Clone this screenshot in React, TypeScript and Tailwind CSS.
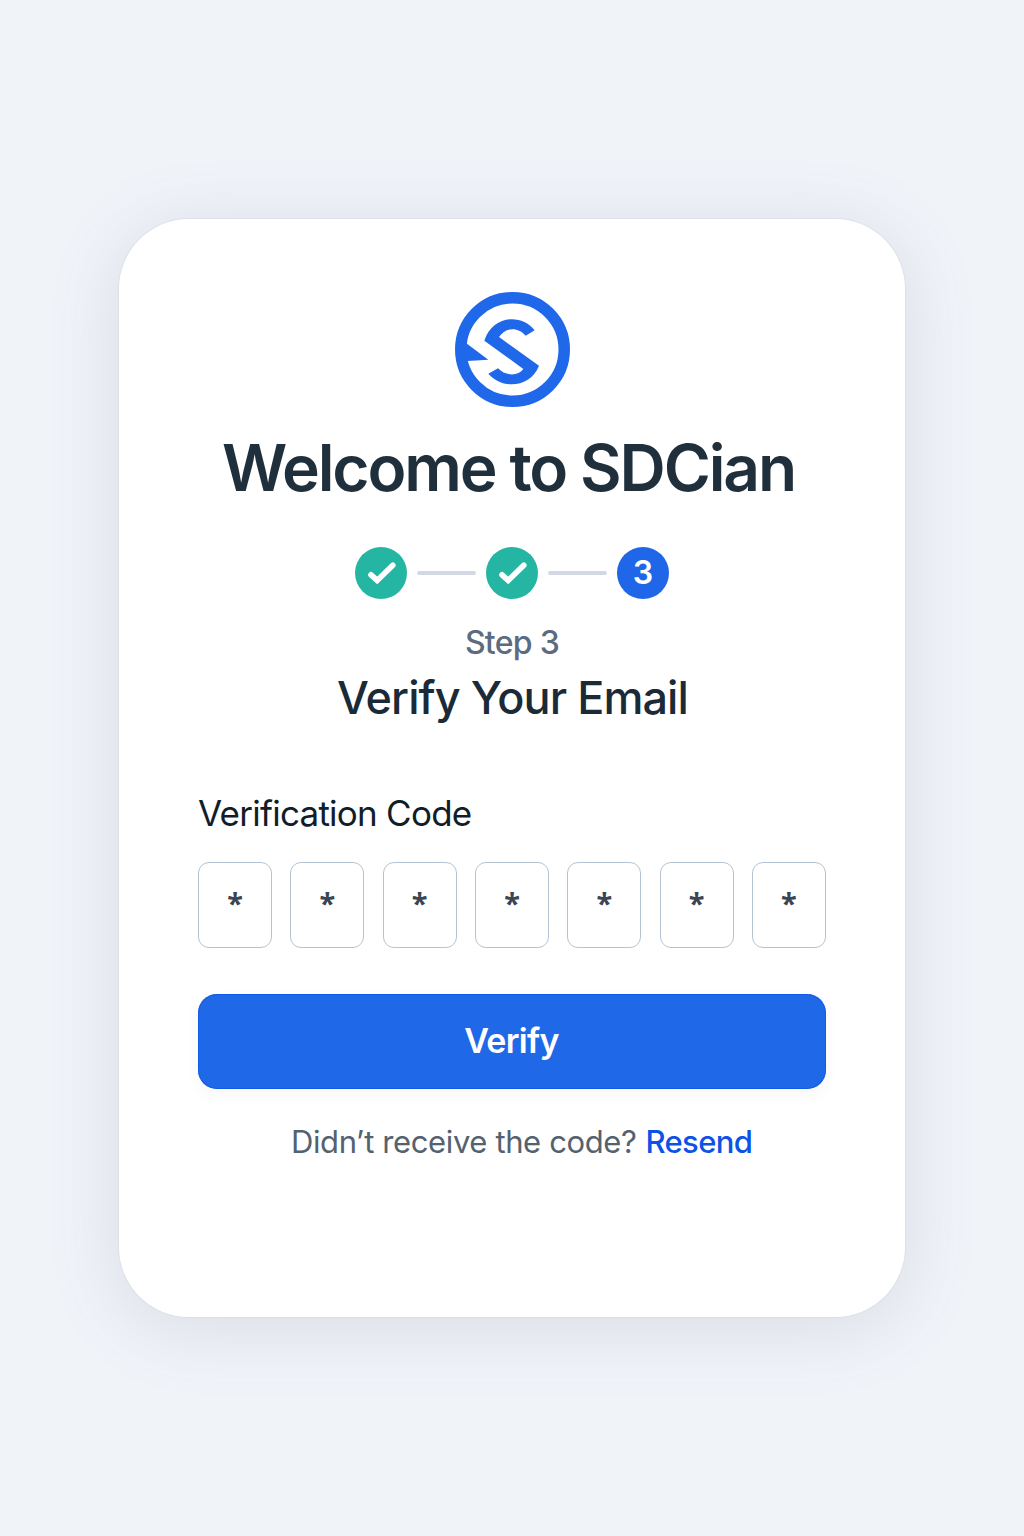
const DIGITS = [0, 1, 2, 3, 4, 5, 6];

function Logo() {
  return (
    <svg viewBox="39 36 345 345" className="ml-px size-[115px]" role="img" aria-label="SDCian logo">
      <circle cx="211.5" cy="208.5" r="155.2" fill="none" stroke="#1f68e9" strokeWidth="34.5" />
      <path d="M64 184 L73 190 L139 239 L64 244 Z" fill="#1f68e9" />
      <path
        d="M278 151 L251 167 C230 141 190 140 171 171 L291 257 C265 324 180 329 139 281 L168 265 C190 289 230 289 244 267 L127 182 C152 106 238 100 278 151 Z"
        fill="#1f68e9"
      />
    </svg>
  );
}

function DoneStep() {
  return (
    <div className="flex size-[52px] items-center justify-center rounded-full bg-[#25b6a3]">
      <svg viewBox="0 0 52 52" className="size-[52px]" fill="none" stroke="#fff" strokeWidth="5.6" strokeLinecap="round" strokeLinejoin="miter">
        <path d="M16 27.8 L22.2 33.4 L37.8 18.2" />
      </svg>
    </div>
  );
}

function Connector() {
  return <div className="mx-[10px] h-1 w-[59px] rounded-full bg-[#d3d9e4]" />;
}

export default function App() {
  return (
    <div className="flex min-h-screen items-start justify-center bg-[#f0f3f8] pt-[219px] font-['Inter',sans-serif]">
      <main className="flex h-[1098px] w-[786px] flex-col items-stretch rounded-[70px] bg-white px-[79px] pt-[73px] shadow-[0_0_0_1px_rgba(205,212,224,0.4),0_10px_70px_rgba(105,112,135,0.17)]">
        <div className="flex justify-center">
          <Logo />
        </div>
        <h1 className="mt-[29px] pr-[7px] text-center text-[64px] leading-[64px] font-semibold tracking-[-2.13px] whitespace-nowrap text-[#1f2f3c]">
          Welcome to SDCian
        </h1>

        <div className="mt-[47px] flex items-center justify-center">
          <DoneStep />
          <Connector />
          <DoneStep />
          <Connector />
          <div className="flex size-[52px] items-center justify-center rounded-full bg-[#1f66e9] text-[32px] leading-[52px] font-semibold text-white">
            3
          </div>
        </div>

        <p className="mt-[28px] text-center text-[32px] leading-[32px] font-medium tracking-[-0.7px] text-[#5b6b81]">Step 3</p>
        <h2 className="mt-[16px] pl-px text-center text-[45px] leading-[46px] font-medium tracking-[-0.92px] text-[#1b2a37]">
          Verify Your Email
        </h2>

        <label className="mt-[74px] text-[35px] leading-[36px] tracking-[-0.75px] text-[#111d28]">Verification Code</label>
        <div className="mt-[31px] flex justify-between">
          {DIGITS.map((d) => (
            <div
              key={d}
              className="flex h-[86px] w-[74px] justify-center rounded-[11px] border-[1.5px] border-[#b5c4d2] pt-[16px] font-['Noto_Sans',sans-serif] text-[29px] leading-[48px] font-bold text-[#3a4452]"
            >
              *
            </div>
          ))}
        </div>

        <button className="mt-[46px] h-[95px] rounded-[19px] bg-[#1f68e8] pr-px pb-[2px] text-[34px] leading-[34px] font-semibold tracking-[-0.75px] text-white shadow-[inset_0_0_0_1px_rgba(10,80,230,0.6),0_6px_14px_rgba(100,112,140,0.06)]">
          Verify
        </button>

        <p className="mt-[37px] ml-[93px] flex text-[31px] leading-[32px] whitespace-nowrap text-[#54626f]">
          <span className="tracking-[-0.38px]">Didn’t receive the code?</span>
          <a className="ml-[9px] font-medium tracking-[-0.6px] text-[#0d52e6]">Resend</a>
        </p>
      </main>
    </div>
  );
}
